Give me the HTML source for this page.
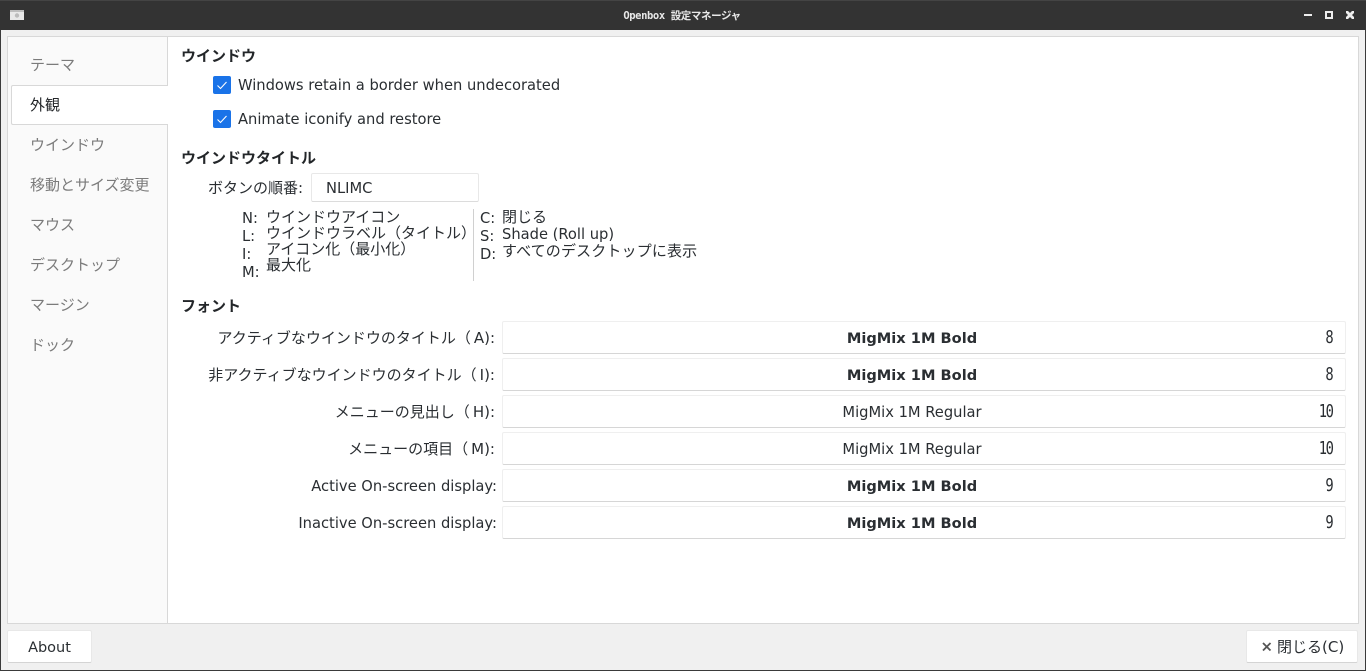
<!DOCTYPE html>
<html lang="ja"><head><meta charset="utf-8"><title>Openbox 設定マネージャ</title>
<style>
html,body{margin:0;padding:0;width:1366px;height:671px;overflow:hidden;background:#f0f0f0}
body{position:relative;font-family:"DejaVu Sans","Noto Sans CJK JP",sans-serif;font-size:15px;color:#2a2e32}
.a,.t{position:absolute}
.t{white-space:nowrap;line-height:20px}
.l{font-size:14.7px;margin-top:1px}
.h{font-weight:bold;font-size:15px;color:#232629}
.n{color:#7b7b7b}
.r{text-align:right}
.r u{text-decoration:none;padding-left:3px}
.f{position:absolute;left:502px;width:842px;height:31px;background:#fff;border:1px solid #efefef;border-bottom:1px solid #d6d6d6;border-radius:2px;font-size:14.7px}
.f b,.f span{position:absolute;left:-1px;width:820px;text-align:center;top:7px;line-height:20px}
.f b{font-size:14.6px}
.f i{position:absolute;right:13px;top:6px;line-height:20px;font-style:normal;font-family:"DejaVu Sans Mono",monospace;font-size:14.5px;letter-spacing:-1.5px;transform:scale(.95,1.2);transform-origin:right center}
.c{position:absolute;left:213px;width:18px;height:18px;background:#1a73e8;border-radius:2px}
.btn{position:absolute;background:#fff;border:1px solid #e8e8e8;border-bottom:1px solid #d4d4d4;border-radius:2px}
.s{line-height:17px}
</style></head><body>
<div class="a" style="left:0;top:0;width:1366px;height:671px;box-sizing:border-box;border:1px solid #3a3a3a;border-top:none"></div>
<div class="a" style="left:0;top:0;width:1366px;height:30px;background:#333;border-top:1px solid #444;box-sizing:border-box"></div>
<svg class="a" style="left:0;top:0" width="40" height="30"><rect x="10" y="10" width="14" height="10" fill="#e8e8e8"/><rect x="10" y="10" width="14" height="2" fill="#bdbdbd"/><circle cx="17" cy="15.5" r="2.2" fill="#bbb"/></svg>
<div class="t" style="left:-1px;width:1366px;text-align:center;top:6px;font-size:10.5px;font-weight:bold;color:#e8e8e8;font-family:'DejaVu Sans Mono','Noto Sans CJK JP',monospace;letter-spacing:-.4px">Openbox 設定マネージャ</div>
<svg class="a" style="left:1300px;top:8px" width="60" height="14" fill="#eee"><rect x="4" y="6" width="8" height="2"/><path fill-rule="evenodd" d="M25 3h8v8h-8zM27 5v4h4V5z"/><path d="M46 3l2 0 2 2 2-2 2 0 0 2-2 2 2 2 0 2-2 0-2-2-2 2-2 0 0-2 2-2-2-2z"/></svg>

<div class="a" style="left:7px;top:36px;width:1350px;height:586px;background:#fff;border:1px solid #d8d8d8"></div>
<div class="a" style="left:8px;top:37px;width:159px;height:586px;background:#fafafa;border-right:1px solid #d8d8d8"></div>
<div class="a" style="left:11px;top:85px;width:156px;height:38px;background:#fff;border:1px solid #d8d8d8;border-right:none;border-radius:2px 0 0 2px"></div>

<div class="t n" style="left:30px;top:55px">テーマ</div>
<div class="t" style="left:30px;top:95px;color:#232629">外観</div>
<div class="t n" style="left:30px;top:135px">ウインドウ</div>
<div class="t n" style="left:30px;top:175px">移動とサイズ変更</div>
<div class="t n" style="left:30px;top:215px">マウス</div>
<div class="t n" style="left:30px;top:255px">デスクトップ</div>
<div class="t n" style="left:30px;top:295px">マージン</div>
<div class="t n" style="left:30px;top:335px">ドック</div>

<div class="t h" style="left:181px;top:46px">ウインドウ</div>
<div class="c" style="top:76px"></div>
<svg class="a" style="left:213px;top:76px" width="18" height="18"><path d="M4.5 9.5l3 3 6-6.5" fill="none" stroke="#fff" stroke-width="1.1"/></svg>
<div class="t l" style="left:238px;top:75px">Windows retain a border when undecorated</div>
<div class="c" style="top:110px"></div>
<svg class="a" style="left:213px;top:110px" width="18" height="18"><path d="M4.5 9.5l3 3 6-6.5" fill="none" stroke="#fff" stroke-width="1.1"/></svg>
<div class="t l" style="left:238px;top:109px">Animate iconify and restore</div>

<div class="t h" style="left:181px;top:148px">ウインドウタイトル</div>
<div class="t" style="left:208px;top:178px">ボタンの順番:</div>
<div class="a" style="left:311px;top:173px;width:166px;height:27px;background:#fff;border:1px solid #e8e8e8;border-bottom:1px solid #dcdcdc;border-radius:2px"></div>
<div class="t l" style="left:326px;top:178px">NLIMC</div>

<div class="t l" style="left:242px;top:208px">N:</div>
<div class="t l" style="left:242px;top:226px">L:</div>
<div class="t l" style="left:242px;top:244px">I:</div>
<div class="t l" style="left:242px;top:262px">M:</div>
<div class="t s" style="left:266px;top:209px">ウインドウアイコン</div>
<div class="t s" style="left:266px;top:225px">ウインドウラベル（タイトル）</div>
<div class="t s" style="left:266px;top:241px">アイコン化（最小化）</div>
<div class="t s" style="left:266px;top:257px">最大化</div>
<div class="a" style="left:473px;top:209px;width:1px;height:72px;background:#d0d0d0"></div>
<div class="t l" style="left:480px;top:208px">C:</div>
<div class="t l" style="left:480px;top:226px">S:</div>
<div class="t l" style="left:480px;top:244px">D:</div>
<div class="t s" style="left:502px;top:209px">閉じる</div>
<div class="t s l" style="left:502px;top:225px">Shade (Roll up)</div>
<div class="t s" style="left:502px;top:243px;letter-spacing:.15px">すべてのデスクトップに表示</div>

<div class="t h" style="left:181px;top:296px">フォント</div>

<div class="t r" style="right:871px;top:328px">アクティブなウインドウのタイトル（<u>A):</u></div>
<div class="t r" style="right:871px;top:365px">非アクティブなウインドウのタイトル（<u>I):</u></div>
<div class="t r" style="right:871px;top:402px">メニューの見出し（<u>H):</u></div>
<div class="t r" style="right:871px;top:439px">メニューの項目（<u>M):</u></div>
<div class="t r l" style="right:869px;top:476px">Active On-screen display:</div>
<div class="t r l" style="right:869px;top:513px">Inactive On-screen display:</div>

<div class="f" style="top:321px"><b>MigMix 1M Bold</b><i>8</i></div>
<div class="f" style="top:358px"><b>MigMix 1M Bold</b><i>8</i></div>
<div class="f" style="top:395px"><span>MigMix 1M Regular</span><i>10</i></div>
<div class="f" style="top:432px"><span>MigMix 1M Regular</span><i>10</i></div>
<div class="f" style="top:469px"><b>MigMix 1M Bold</b><i>9</i></div>
<div class="f" style="top:506px"><b>MigMix 1M Bold</b><i>9</i></div>

<div class="btn" style="left:7px;top:630px;width:83px;height:31px"></div>
<div class="t" style="left:7px;width:85px;text-align:center;top:638px;font-size:14.5px">About</div>
<div class="btn" style="left:1246px;top:630px;width:110px;height:31px"></div>
<svg class="a" style="left:1262px;top:642px" width="10" height="10"><path d="M1 1l7.5 7.5M8.5 1L1 8.5" stroke="#555" stroke-width="1.8"/></svg>
<div class="t" style="left:1277px;top:637px">閉じる(C)</div>
</body></html>
